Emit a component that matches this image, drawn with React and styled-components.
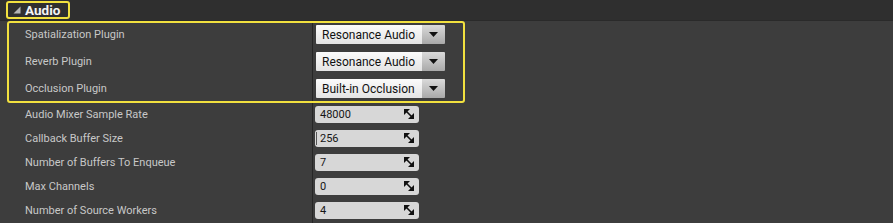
import React from "react";
import styled, { createGlobalStyle } from "styled-components";

const Global = createGlobalStyle`
  html, body { margin: 0; padding: 0; background: #3d3d3d; }
  body { font-family: Roboto, "Noto Sans", "Liberation Sans", sans-serif; }
  * { box-sizing: border-box; }
`;

const Panel = styled.div`
  width: 893px;
  height: 223px;
  background: #3d3d3d;
  overflow: hidden;
  display: flex;
  flex-direction: column;
`;

const Header = styled.div`
  height: 21px;
  background: #2f2f2f;
  border-bottom: 1px solid #2a2a2a;
  display: flex;
  align-items: center;
  padding-left: 6px;
`;

const Title = styled.div`
  display: inline-flex;
  align-items: center;
  gap: 4px;
  height: 18px;
  padding: 0 8px 0 5px;
  border: 2px solid #f2e13f;
  border-radius: 3px;
  color: #f4f4f4;
  font-weight: 700;
  font-size: 13.5px;
`;

const Body = styled.div`
  position: relative;
  flex: 1;
  display: flex;
  flex-direction: column;
  &::before {
    content: "";
    position: absolute;
    left: 312px;
    top: 0;
    bottom: 0;
    width: 1px;
    background: #262626;
  }
`;

const Group = styled.div`
  position: relative;
  display: flex;
  flex-direction: column;
`;

const Highlight = styled.div`
  position: absolute;
  left: 7px;
  top: 0px;
  width: 458px;
  height: 82px;
  border: 2px solid #f2e13f;
  border-radius: 3px;
  pointer-events: none;
`;

const Row = styled.div`
  height: ${(p) => p.$h}px;
  display: grid;
  grid-template-columns: 312px 1fr;
  align-items: center;
`;

const Label = styled.div`
  padding-left: 25px;
  color: #c8c8c8;
  font-size: 11px;
`;

const Value = styled.div`
  padding-left: ${(p) => p.$pad}px;
  display: flex;
  align-items: center;
`;

const Combo = styled.div`
  width: 129px;
  height: 19px;
  display: flex;
  border-radius: 1px;
  overflow: hidden;
`;

const ComboText = styled.div`
  flex: 1;
  background: linear-gradient(#fbfbfb, #e4e4e4);
  color: #111;
  font-size: 12px;
  padding-left: 6px;
  display: flex;
  align-items: center;
  white-space: nowrap;
`;

const ComboArrow = styled.div`
  width: 23px;
  background: linear-gradient(#dadada, #a9a9a9);
  display: flex;
  align-items: center;
  justify-content: center;
`;

const NumBox = styled.div`
  position: relative;
  width: 104px;
  height: 17px;
  background: #d7d7d7;
  border-radius: 3px;
  display: flex;
  align-items: center;
  justify-content: space-between;
  padding: 0 5px 0 5px;
  color: #151515;
  font-size: 11px;
`;

const Caret = styled.span`
  position: absolute;
  left: 1px;
  top: 2px;
  width: 1px;
  height: 13px;
  background: #555;
`;

const Triangle = () => (
  <svg width="8" height="8" viewBox="0 0 8 8">
    <path d="M7.5 0.5 L7.5 7.5 L0.5 7.5 Z" fill="#b5b5b5" />
  </svg>
);

const Arrow = () => (
  <svg width="9" height="5" viewBox="0 0 9 5">
    <path d="M0 0 H9 L4.5 5 Z" fill="#111" />
  </svg>
);

const Resize = () => (
  <svg width="10" height="10" viewBox="0 0 10 10">
    <path d="M0 0 H6 L0 6 Z" fill="#111" />
    <path d="M10 10 H4 L10 4 Z" fill="#111" />
    <path d="M2.5 2.5 L7.5 7.5" stroke="#111" strokeWidth="1.6" />
  </svg>
);

const plugins = [
  ["Spatialization Plugin", "Resonance Audio"],
  ["Reverb Plugin", "Resonance Audio"],
  ["Occlusion Plugin", "Built-in Occlusion"],
];

const numbers = [
  ["Audio Mixer Sample Rate", "48000"],
  ["Callback Buffer Size", "256", true],
  ["Number of Buffers To Enqueue", "7"],
  ["Max Channels", "0"],
  ["Number of Source Workers", "4"],
];

export default function App() {
  return (
    <>
      <Global />
      <Panel>
        <Header>
          <Title>
            <Triangle />
            Audio
          </Title>
        </Header>
        <Body>
          <Group>
            {plugins.map(([label, val]) => (
              <Row key={label} $h={27}>
                <Label>{label}</Label>
                <Value $pad={4}>
                  <Combo>
                    <ComboText>{val}</ComboText>
                    <ComboArrow>
                      <Arrow />
                    </ComboArrow>
                  </Combo>
                </Value>
              </Row>
            ))}
            <Highlight />
          </Group>
          {numbers.map(([label, val, caret]) => (
            <Row key={label} $h={24}>
              <Label>{label}</Label>
              <Value $pad={3}>
                <NumBox>
                  {caret && <Caret />}
                  <span>{val}</span>
                  <Resize />
                </NumBox>
              </Value>
            </Row>
          ))}
        </Body>
      </Panel>
    </>
  );
}
